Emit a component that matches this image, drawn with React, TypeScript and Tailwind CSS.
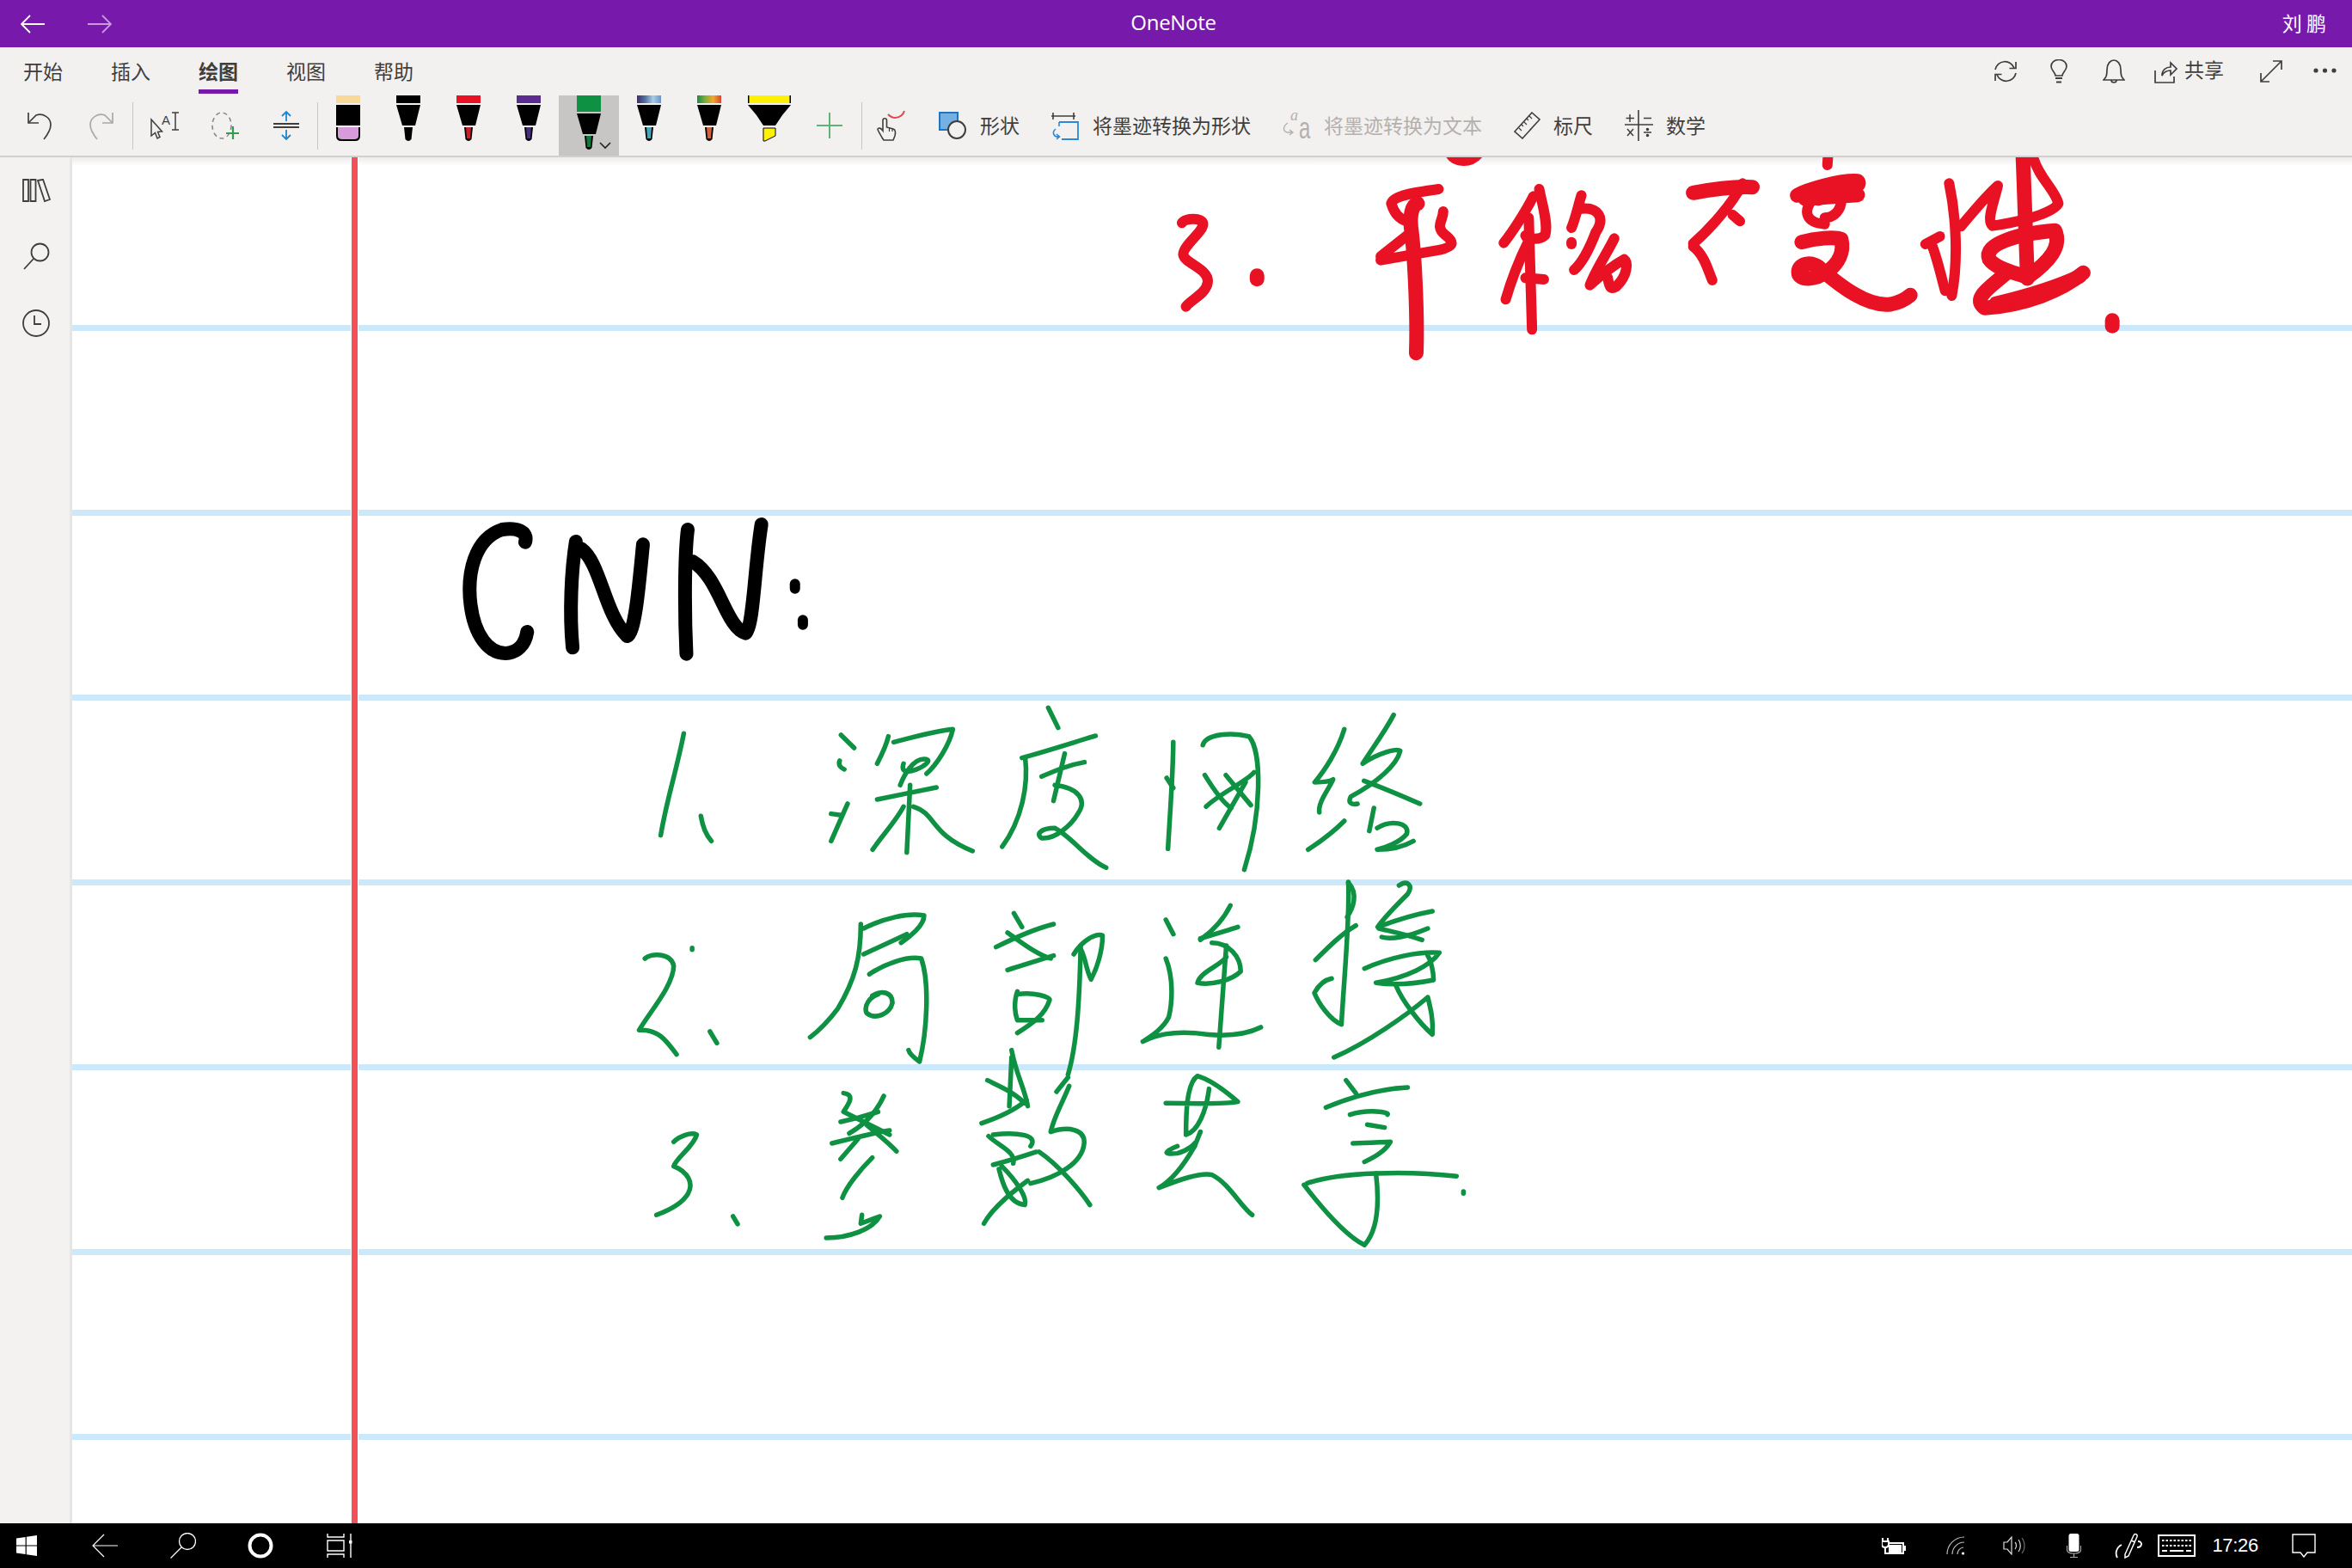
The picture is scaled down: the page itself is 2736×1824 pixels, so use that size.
import React from "react";

const RED = [
  "M98 268 C102 250 130 248 130 272 C130 300 98 350 100 380 C103 410 140 430 137 475 C135 515 112 535 104 560",
  "M488 150 C450 162 420 172 416 200 C420 230 428 255 440 262",
  "M495 228 C495 260 482 280 498 310 C515 340 508 352 490 362 L400 398",
  "M440 312 L400 385",
  "M641 150 C645 200 655 270 650 310 C642 330 622 325 620 312",
  "M632 175 C620 230 600 300 587 338",
  "M625 250 L630 640",
  "M625 330 C610 400 597 480 590 535",
  "M620 460 L648 465",
  "M705 172 C700 210 695 260 690 285",
  "M705 218 C730 212 742 250 727 300 C717 360 705 410 694 432",
  "M690 335 L690 342",
  "M755 322 C745 370 727 430 718 485 C730 460 750 420 770 395 C776 405 776 450 758 490 C747 505 747 480 745 458",
  "M935 240 L946 262",
  "M950 130 C935 200 900 290 875 340",
  "M875 350 C892 380 897 430 904 468",
  "M1055 190 C1042 230 1047 268 1075 272",
  "M1100 190 C1100 220 1090 250 1075 250",
  "M1264 130 C1275 250 1278 400 1268 522",
  "M1236 335 C1245 380 1250 440 1258 505",
  "M1228 342 L1250 315",
  "M1282 280 C1300 230 1320 175 1338 138 C1333 190 1320 260 1330 278 C1360 268 1420 240 1430 200 C1425 150 1400 110 1392 40",
  "M1080 30 L1079 66",
];
const RED_THICK = [
  "M456 200 C448 205 443 240 447 300 C452 400 456 600 454 722",
  "M875 163 C900 152 940 140 965 143",
  "M1033 172 C1050 150 1100 118 1125 122 C1133 142 1105 160 1065 182",
  "M1125 170 L1045 183",
  "M1040 335 C1060 322 1090 315 1100 325 C1105 370 1095 410 1080 436 C1060 470 1035 470 1035 440 C1035 405 1060 400 1070 432 C1100 490 1140 562 1175 552 C1190 545 1200 530 1205 520",
  "M1425 295 C1370 305 1315 340 1325 395 C1335 430 1370 445 1383 458 C1418 400 1435 350 1425 295",
  "M1350 445 C1322 500 1300 530 1318 565 C1380 555 1435 505 1468 442",
  "M1335 550 C1380 525 1430 490 1462 455",
  "M1376 25 L1383 462",
  "M212 452 L212 464",
  "M1512 608 L1512 628",
  "M508 22 C515 50 535 52 546 22",
];
const GREEN_A = [
  "M386 820 C375 950 360 1050 351 1175",
  "M412 1108 C415 1150 420 1175 428 1195",
  "M625 825 L645 870",
  "M623 915 C620 930 625 940 630 945",
  "M635 1065 L610 1195",
  "M610 1100 L625 1105",
  "M680 925 C690 880 695 850 697 830",
  "M705 850 C740 830 770 810 795 805 C790 860 770 930 755 960",
  "M720 925 C710 990 770 920 755 910 C735 900 720 970 715 1000",
  "M680 1050 C700 1040 745 1020 770 1008",
  "M730 1000 L725 1235",
  "M720 1075 C710 1120 690 1170 673 1225",
  "M735 1075 C770 1100 760 1170 825 1230",
  "M940 730 L955 800",
  "M900 905 C940 880 980 850 1012 828",
  "M905 905 C910 1000 900 1120 870 1215",
  "M930 970 C950 950 970 930 995 920",
  "M965 890 L948 1055",
  "M950 1000 C985 1010 1000 1050 985 1100 C975 1140 950 1190 930 1185 C920 1170 930 1150 950 1150 C975 1180 1000 1260 1028 1288",
  "M1130 850 C1130 950 1125 1100 1122 1222",
  "M1120 975 L1130 1010",
  "M1175 860 C1180 820 1220 815 1245 830 C1265 880 1265 1100 1238 1295",
  "M1178 965 C1190 1010 1205 1060 1218 1080",
  "M1180 1075 C1200 1030 1240 990 1253 955",
  "M1210 965 L1248 1070",
  "M1240 990 L1200 1150",
  "M1390 805 C1380 880 1360 950 1345 990 C1360 990 1370 985 1373 980 C1365 1020 1350 1060 1352 1095",
  "M1390 1125 C1375 1160 1355 1195 1335 1225",
  "M1465 755 C1450 820 1430 880 1418 925 C1440 890 1470 870 1475 880 C1470 930 1440 990 1400 1040 C1395 1060 1400 1070 1410 1065",
  "M1420 985 C1450 1010 1480 1040 1505 1065",
  "M1428 1160 L1435 1080",
  "M1440 1150 C1460 1120 1490 1130 1485 1170 C1475 1200 1450 1220 1440 1225 C1460 1225 1480 1215 1495 1195",
];
const GREEN_B = [
  "M75 345 C85 325 120 325 125 370 C125 440 80 540 65 595 C100 590 115 640 130 680",
  "M157 308 L157 314",
  "M188 600 L200 640",
  "M455 240 C490 205 530 185 560 195 C560 230 535 270 520 290",
  "M450 225 C450 340 440 420 410 520 C395 560 375 600 362 620",
  "M455 330 L530 260",
  "M465 400 C490 365 530 335 555 345 C570 430 565 600 552 705 C545 695 535 680 533 665",
  "M480 470 C465 480 455 510 460 535 C475 560 500 540 505 500 C505 460 485 455 470 475",
  "M716 187 L730 235",
  "M685 305 C720 270 755 240 785 225",
  "M705 255 C730 290 755 330 780 345",
  "M705 385 C730 370 760 350 785 335",
  "M722 460 C715 500 718 540 722 560",
  "M722 470 C750 460 780 480 778 490 C770 540 750 570 722 605",
  "M725 560 L765 560",
  "M820 330 C835 280 860 255 870 265 C870 320 860 380 850 418 C840 380 840 330 830 305",
  "M832 300 C830 500 825 650 810 750",
  "M980 210 L993 260",
  "M980 345 C995 420 990 510 985 550 C975 590 955 615 940 635 C965 610 990 600 1030 605 C1080 620 1120 610 1145 585",
  "M1092 160 C1080 210 1060 250 1040 280",
  "M1040 275 C1065 260 1090 245 1105 235",
  "M1060 290 C1090 290 1110 340 1110 390 C1095 420 1060 440 1035 430 C1040 390 1075 370 1085 340",
  "M1085 300 L1072 655",
  "M1297 78 C1300 200 1290 400 1285 575 C1265 560 1245 500 1238 465 C1245 440 1255 420 1268 415",
  "M1240 350 C1265 300 1285 260 1310 230",
  "M1297 80 C1315 120 1305 170 1295 200",
  "M1385 90 C1400 70 1410 90 1400 120 C1380 160 1360 200 1348 235 C1375 215 1415 190 1443 180",
  "M1350 240 C1370 250 1395 260 1425 280",
  "M1435 240 C1400 270 1370 280 1355 270",
  "M1325 380 C1370 340 1420 320 1455 325 C1440 370 1400 410 1345 430 C1380 440 1420 430 1445 420 C1445 390 1440 350 1435 335",
  "M1380 440 C1390 490 1420 570 1443 610 C1445 560 1440 520 1435 480 C1400 540 1330 640 1272 690",
  "M125 985 C135 965 155 950 165 960 C160 1000 130 1040 125 1070 C150 1090 160 1130 150 1165 C140 1200 115 1225 95 1240",
  "M228 1245 L236 1272",
  "M420 815 C440 820 430 850 420 880 C440 900 470 930 500 960",
  "M490 825 C480 870 460 920 430 955",
  "M415 915 C440 905 465 890 480 880",
  "M400 990 C440 970 480 950 500 945",
  "M460 925 C480 960 500 990 512 1018",
  "M445 975 L415 1045",
  "M470 1040 C450 1080 425 1140 418 1180",
  "M390 1320 C430 1320 470 1290 483 1245 L450 1270 L452 1240",
  "M712 665 C720 750 735 800 740 860",
  "M670 770 C690 790 715 810 735 850",
  "M712 690 L708 860",
  "M660 920 C690 900 720 870 738 840",
  "M680 960 C720 950 760 960 745 1000",
  "M672 965 C690 1000 720 1020 715 1060",
  "M680 1065 C710 1050 740 1030 755 1020",
  "M695 1070 C720 1120 740 1180 735 1205 C705 1200 695 1120 690 1080",
  "M740 1120 C720 1150 680 1210 664 1270",
  "M810 760 L790 810",
  "M812 790 C800 850 785 900 780 950 C810 930 840 940 838 990 C835 1060 790 1110 745 1130",
  "M760 1020 C790 1060 830 1150 848 1205",
  "M980 850 C1020 850 1080 855 1105 845 C1085 810 1060 770 1035 755 C1015 780 1015 900 1015 960 C1035 950 1050 880 1055 800",
  "M1040 950 L1030 1000",
  "M1000 1000 C975 1020 975 1030 1000 1025 C1020 1015 1030 990 1030 990",
  "M1030 1000 C1010 1070 990 1120 968 1145 C1000 1120 1040 1090 1060 1100 C1090 1130 1110 1210 1130 1240",
  "M1293 770 L1310 815",
  "M1258 865 C1300 830 1350 800 1400 795",
  "M1300 890 C1330 870 1370 880 1365 890",
  "M1330 925 L1360 935",
  "M1305 990 C1330 990 1360 985 1370 985 C1360 1020 1340 1040 1325 1055",
  "M1225 1130 C1280 1090 1400 1085 1485 1105",
  "M1220 1135 C1245 1200 1290 1310 1325 1345 C1350 1290 1350 1180 1345 1095",
  "M1497 1158 L1497 1165",
];
const BLACK = [
  "M145 152 C150 112 130 100 110 108 C68 140 56 260 62 370 C68 480 90 540 115 540 C133 538 145 510 148 465",
  "M222 150 C215 250 212 400 217 520",
  "M230 175 C260 225 265 400 300 480 C312 470 318 300 324 160",
  "M392 108 C387 200 387 400 390 542",
  "M400 220 C440 275 450 450 480 470 C492 445 493 250 504 90",
];

function Ink({ paths, color, width, tx, ty, sx, sy }: { paths: string[]; color: string; width: number; tx: number; ty: number; sx: number; sy: number }) {
  return (
    <g transform={`translate(${tx} ${ty}) scale(${sx} ${sy})`} fill="none" stroke={color} strokeWidth={width} strokeLinecap="round" strokeLinejoin="round">
      {paths.map((d, i) => (
        <path key={i} d={d} vectorEffect="non-scaling-stroke" />
      ))}
    </g>
  );
}

const IC = "#3f3e3d";

function Pen({ cap, tip, kind = "pen", selected = false, gradient }: { cap: string; tip: string; kind?: "pen" | "marker" | "hl"; selected?: boolean; gradient?: string[] }) {
  const id = `g${cap.replace("#", "")}`;
  const dy = selected ? 10 : 0;
  return (
    <div className={`w-[70px] h-[70px] ${selected ? "bg-[#c8c6c4]" : ""}`}>
      <svg width="70" height="70" viewBox="0 0 70 70">
        {gradient && (
          <defs>
            <linearGradient id={id}>
              {gradient.map((c, i) => (
                <stop key={i} offset={i / (gradient.length - 1)} stopColor={c} />
              ))}
            </linearGradient>
          </defs>
        )}
        {kind === "hl" ? (
          <g>
            <rect x="10" y="0" width="50" height="9" fill="#000" />
            <rect x="11.5" y="0" width="47" height="9" fill={cap} />
            <path d="M10 11 H60 L50 23 L42 35 H28 L20 23 Z" fill="#000" />
            <path d="M28 38 H42 V47 L30 53 H28 Z" fill={tip} stroke="#000" strokeWidth="1" />
          </g>
        ) : (
          <g>
            <rect x="21" y="0" width="28" height={9 + dy} fill={gradient ? `url(#${id})` : cap} />
            {kind === "marker" ? (
              <g>
                <rect x="21" y="11" width="28" height="24" fill="#000" />
                <path d="M21 37 H49 V47 Q49 53 43 53 H27 Q21 53 21 47 Z" fill="#000" />
                <path d="M23 37 H47 V47 Q47 51 42 51 H28 Q23 51 23 47 Z" fill={tip} />
              </g>
            ) : (
              <g>
                <path d={`M21 ${11 + dy} H49 L43 ${35 + dy} H28 Z`} fill="#000" />
                <path d={`M30 ${37 + dy} H40 L38.5 ${51 + dy} Q35 ${55 + dy} 31.5 ${51 + dy} Z`} fill="#000" />
                <path d={`M32 ${37 + dy} H38 L37 ${50 + dy} H33 Z`} fill={tip} />
              </g>
            )}
          </g>
        )}
        {selected && <path d="M48 55 L54 61 L60 55" fill="none" stroke="#222" strokeWidth="1.6" />}
      </svg>
    </div>
  );
}

function Labeled({ icon, label, disabled = false, gap = 16 }: { icon: React.ReactNode; label: string; disabled?: boolean; gap?: number }) {
  return (
    <div className={`flex items-center ml-[37px] ${gap === 16 ? "gap-[16px]" : "gap-[15px]"} ${disabled ? "text-[#b3b0ad]" : "text-[#3f3e3d]"}`}>
      {icon}
      <span className="text-[23px] leading-none whitespace-nowrap -mt-[1px]">{label}</span>
    </div>
  );
}

function S({ w, h, children, className = "" }: { w: number; h: number; children: React.ReactNode; className?: string }) {
  return (
    <svg width={w} height={h} viewBox={`0 0 ${w} ${h}`} fill="none" stroke={IC} strokeWidth="1.7" className={`shrink-0 ${className}`}>
      {children}
    </svg>
  );
}

function Tab({ label, active = false }: { label: string; active?: boolean }) {
  return (
    <div className={`h-[54px] pt-[6px] flex items-center border-b-[5px] text-[23px] leading-none text-[#3f3e3d] ${active ? "border-[#7719aa] font-bold" : "border-transparent"}`}>
      {label}
    </div>
  );
}

function Sep() {
  return <div className="w-px h-[55px] bg-[#c8c6c4] shrink-0" />;
}

function ToolBtn({ children, w = "w-[71px]" }: { children: React.ReactNode; w?: string }) {
  return <div className={`${w} h-[70px] flex items-center justify-center shrink-0`}>{children}</div>;
}

export default function App() {
  return (
    <div className="w-[2736px] h-[1824px] flex flex-col overflow-hidden bg-white font-['Noto_Sans_CJK_SC','Noto_Sans',sans-serif]">
      {/* Title bar */}
      <div className="h-[55px] bg-[#7719aa] flex items-center text-white shrink-0">
        <div className="flex-1 flex items-center pl-[24px] gap-[50px]">
          <svg width="28" height="22" viewBox="0 0 28 22" fill="none" stroke="#fff" strokeWidth="1.8"><path d="M28 11 H1 M11 1 L1 11 L11 21" /></svg>
          <svg width="28" height="22" viewBox="0 0 28 22" fill="none" stroke="#c898e0" strokeWidth="1.8"><path d="M0 11 H27 M17 1 L27 11 L17 21" /></svg>
        </div>
        <div className="text-[24px] leading-none font-['Open_Sans','Noto_Sans',sans-serif] tracking-[-0.3px] -mt-[3px]">OneNote</div>
        <div className="flex-1 flex justify-end pr-[30px] text-[23px] leading-none -mt-[3px]">刘 鹏</div>
      </div>

      {/* Ribbon */}
      <div className="bg-[#f3f1f0] h-[128px] shrink-0 border-b-2 border-[#d2d0ce] flex flex-col">
        <div className="h-[56px] flex items-start pl-[27px] pr-[18px] shrink-0">
          <div className="flex gap-[56px]">
            <Tab label="开始" />
            <Tab label="插入" />
            <Tab label="绘图" active />
            <Tab label="视图" />
            <Tab label="帮助" />
          </div>
          <div className="ml-auto h-[56px] flex items-center">
            <S w={28} h={26}>
              <path d="M2 11 A11.5 11.5 0 0 1 24 9" />
              <path d="M26 2 V9.5 H18.5" />
              <path d="M26 15 A11.5 11.5 0 0 1 4 17" />
              <path d="M2 24 V16.5 H9.5" />
            </S>
            <S w={20} h={28} className="ml-[38px]">
              <path d="M6 19 C6 15 1 13 1 8 A9 7.5 0 0 1 19 8 C19 13 14 15 14 19 Z" />
              <path d="M6 22 H14 M7 26.5 H13" strokeWidth="2" />
            </S>
            <S w={26} h={28} className="ml-[41px]">
              <path d="M1 24 C4 21 5 19 5 12 C5 5 9 1 13 1 C17 1 21 5 21 12 C21 19 22 21 25 24 Z" />
              <path d="M10 24 A3 3 0 0 0 16 24" />
            </S>
            <S w={27} h={27} className="ml-[34px]">
              <path d="M1 12 V26 H23 V19" />
              <path d="M9 18 C9 11 14 8 19 8 V3 L26 10 L19 17 V12 C14 12 11 14 9 18 Z" />
            </S>
            <span className="ml-[8px] text-[23px] leading-none text-[#3f3e3d] -mt-[5px]">共享</span>
            <S w={26} h={26} className="ml-[42px]">
              <path d="M1 25 L25 1 M15 1 H25 V11 M1 15 V25 H11" />
            </S>
            <svg width="27" height="6" viewBox="0 0 27 6" fill="#3f3e3d" className="ml-[36px] -mt-[2px]"><circle cx="3" cy="3" r="2.6" /><circle cx="13.5" cy="3" r="2.6" /><circle cx="24" cy="3" r="2.6" /></svg>
          </div>
        </div>
        <div className="h-[70px] flex items-center shrink-0 pl-[10px]">
          <ToolBtn w="w-[72px]">
            <S w={32} h={34}>
              <path d="M3 2 V14 H15" />
              <path d="M3 14 L12 5 C20 2 29 8 29 16 C29 22 25 28 21 33" />
            </S>
          </ToolBtn>
          <ToolBtn w="w-[72px]">
            <S w={32} h={34} className="opacity-40">
              <path d="M29 2 V14 H17" />
              <path d="M29 14 L20 5 C12 2 3 8 3 16 C3 22 7 28 11 33" />
            </S>
          </ToolBtn>
          <Sep />
          <ToolBtn>
            <svg width="36" height="32" viewBox="0 0 36 32" fill="none" stroke={IC} strokeWidth="1.5" className="overflow-visible">
              <path d="M3 9 V28 L7.5 24.5 L10 31 L13 29.5 L10.5 23.5 L15.5 23 Z" />
              <text x="15" y="15" fontSize="15" fill={IC} stroke="none" fontFamily="'Liberation Sans',sans-serif">A</text>
              <path d="M27 1 H35 M27 21 H35 M31 1 V21" />
            </svg>
          </ToolBtn>
          <ToolBtn>
            <svg width="34" height="34" viewBox="0 0 34 34" fill="none">
              <ellipse cx="13" cy="17" rx="11" ry="15" stroke="#8a8886" strokeWidth="1.6" strokeDasharray="5 4" />
              <path d="M26 18 V33 M18 26 H33" stroke="#2f9e4f" strokeWidth="2.2" />
            </svg>
          </ToolBtn>
          <ToolBtn>
            <svg width="32" height="34" viewBox="0 0 32 34" fill="none">
              <path d="M1 15 H31 M1 19 H31" stroke="#3f3e3d" strokeWidth="2" />
              <path d="M16 12 V1 M11 6 L16 1 L21 6 M16 22 V33 M11 28 L16 33 L21 28" stroke="#1f85cf" strokeWidth="1.8" />
            </svg>
          </ToolBtn>
          <div className="w-px" />
          <Sep />
          <Pen cap="#f8d998" tip="#d79bdc" kind="marker" />
          <Pen cap="#000000" tip="#000000" />
          <Pen cap="#e81224" tip="#c8202a" />
          <Pen cap="#5c2d91" tip="#46307e" />
          <Pen cap="#0e9142" tip="#0e7a3a" selected />
          <Pen cap="#223" tip="#46a6b8" gradient={["#3a2c70", "#54709f", "#a8cdea", "#6a94c8"]} />
          <Pen cap="#1a9" tip="#d0613a" gradient={["#1b8a45", "#7fae3a", "#f4a62c", "#d9442e"]} />
          <Pen cap="#fff100" tip="#fff100" kind="hl" />
          <ToolBtn w="w-[70px]">
            <svg width="32" height="32" viewBox="0 0 32 32" stroke="#5fb377" strokeWidth="2"><path d="M16 1 V31 M1 16 H31" /></svg>
          </ToolBtn>
          <div className="w-[2px]" />
          <Sep />
          <div className="ml-[15px] w-[37px] flex justify-center">
            <svg width="34" height="36" viewBox="0 0 34 36" fill="none">
              <path d="M13 5 C15 7 17 9 21 9 C27 9 31 5 32 1" stroke="#e0484f" strokeWidth="2" />
              <path d="M6 32 C4 28 1 24 1 22 C2 20 5 21 7 24 V12 A2.2 2.2 0 0 1 11.5 12 V20 L19 22 C22 23 22 26 21 30 L19 35 H8 Z" stroke={IC} strokeWidth="1.6" />
              <path d="M14.5 20 V25 M18 21 V25" stroke={IC} strokeWidth="1.2" />
            </svg>
          </div>
          <Labeled
            label="形状"
            icon={
              <svg width="32" height="32" viewBox="0 0 32 32" fill="none" className="shrink-0">
                <rect x="1" y="1" width="21" height="20" fill="#74b0e2" stroke="#1f75c0" strokeWidth="2" />
                <circle cx="21" cy="21" r="10" fill="#f3f1f0" stroke={IC} strokeWidth="2" />
              </svg>
            }
          />
          <Labeled
            label="将墨迹转换为形状"
            icon={
              <svg width="32" height="33" viewBox="0 0 32 33" fill="none" className="shrink-0">
                <path d="M2 1 V9 M26 1 V9 M0 5 H28" stroke={IC} strokeWidth="1.6" />
                <path d="M9 12 H31 V32 H12" stroke="#2b88d8" strokeWidth="1.8" />
                <path d="M9 12 V17 M5 20 C0 24 3 30 9 29 M6 26 L9.5 29 L6 32" stroke="#2b88d8" strokeWidth="1.6" />
              </svg>
            }
          />
          <Labeled
            disabled
            label="将墨迹转换为文本"
            gap={15}
            icon={
              <svg width="33" height="34" viewBox="0 0 33 34" fill="none" className="shrink-0 overflow-visible">
                <text x="9" y="11" fontSize="18" fontStyle="italic" fill="#b3b0ad" fontFamily="'Liberation Serif',serif">a</text>
                <text transform="translate(19 32) scale(1 1.5)" x="0" y="0" fontSize="24" fill="#b3b0ad" fontFamily="'Liberation Sans',sans-serif">a</text>
                <path d="M6 14 C0 18 0 24 6 25 H12 M8 22 L12 25 L8 28" stroke="#b3b0ad" strokeWidth="1.4" />
              </svg>
            }
          />
          <Labeled
            label="标尺"
            gap={15}
            icon={
              <svg width="31" height="32" viewBox="0 0 31 32" fill="none" stroke={IC} strokeWidth="1.6" className="shrink-0">
                <path d="M21 1 L30 9 L10 31 L1 23 Z" />
                <path d="M18 5 L21 8 M15 8 L17 10 M12 12 L15 15 M9 15 L11 17 M6 19 L9 22" strokeWidth="1.2" />
              </svg>
            }
          />
          <Labeled
            label="数学"
            gap={15}
            icon={
              <svg width="33" height="36" viewBox="0 0 33 36" fill="none" stroke={IC} strokeWidth="1.6" className="shrink-0">
                <path d="M16 0 V36 M0 17 H33" />
                <path d="M6 5 V14 M1.5 9.5 H11 M22 9.5 H31 M3 22 L10 30 M10 22 L3 30 M22 26 H31" strokeWidth="1.5" />
                <circle cx="26.5" cy="22.5" r="1" fill={IC} />
                <circle cx="26.5" cy="29.5" r="1" fill={IC} />
              </svg>
            }
          />
        </div>
      </div>

      {/* Main */}
      <div className="flex-1 flex min-h-0">
        <div className="w-[84px] shrink-0 bg-[#f3f2f1] border-r-[3px] border-[#e6e5e4] flex flex-col items-center gap-[46px] pt-[25px] pl-[3px]">
          <S w={33} h={28}>
            <path d="M1 1 H7 V26 H1 Z M9.5 1 H15.5 V26 H9.5 Z" strokeWidth="1.8" />
            <path d="M18 2 L24 0.8 L32 24 L26 26 Z" strokeWidth="1.8" />
          </S>
          <S w={31} h={32}>
            <circle cx="19.5" cy="11.5" r="10" strokeWidth="1.8" />
            <path d="M12 19 L1 31" strokeWidth="1.8" />
          </S>
          <S w={32} h={32}>
            <circle cx="16" cy="16" r="15" strokeWidth="1.8" />
            <path d="M14 7 V17 H22" strokeWidth="1.8" />
          </S>
        </div>
        <div className="flex-1 relative overflow-hidden bg-white">
          <div className="flex flex-col gap-[208px] pt-[195px]">
            {[0, 1, 2, 3, 4, 5, 6].map((i) => (
              <div key={i} className="h-[7px] bg-[#cce9fb]" />
            ))}
          </div>
          <div className="absolute top-0 left-0 right-0 h-[10px] bg-gradient-to-b from-[#ececec] to-transparent" />
          <div className="absolute top-0 bottom-0 left-[325px] w-[7px] bg-[#f4505a] ring-1 ring-white" />
          <svg className="absolute inset-0" width="2652" height="1589" viewBox="84 183 2652 1589">
            <Ink paths={RED} color="#e81224" width={12} tx={1300} ty={170} sx={0.7653} sy={0.3333} />
            <Ink paths={RED_THICK} color="#e81224" width={17} tx={1300} ty={170} sx={0.7653} sy={0.3333} />
            <Ink paths={BLACK} color="#000" width={16} tx={500} ty={580} sx={0.7653} sy={0.3333} />
            <Ink paths={["M555 298 L555 314", "M567 424 L567 440"]} color="#000" width={12} tx={500} ty={580} sx={0.7653} sy={0.3333} />
            <Ink paths={GREEN_A} color="#0e9142" width={5.5} tx={500} ty={580} sx={0.7653} sy={0.3333} />
            <Ink paths={GREEN_B} color="#0e9142" width={5.5} tx={700} ty={1000} sx={0.6696} sy={0.3333} />
          </svg>
        </div>
      </div>

      {/* Taskbar */}
      <div className="h-[52px] bg-black shrink-0 flex items-center">
        <svg width="24" height="24" viewBox="0 0 24 24" fill="#fff" className="ml-[19px]"><path d="M0 3.4 L10.6 2 V11.4 H0 Z M11.8 1.8 L24 0 V11.4 H11.8 Z M0 12.6 H10.6 V22 L0 20.6 Z M11.8 12.6 H24 V24 L11.8 22.2 Z" /></svg>
        <svg width="30" height="28" viewBox="0 0 30 28" fill="none" stroke="#fff" strokeWidth="1.2" className="ml-[64px]"><path d="M30 14 H1 M14 1 L1 14 L14 27" /></svg>
        <svg width="30" height="30" viewBox="0 0 30 30" fill="none" stroke="#fff" strokeWidth="1.3" className="ml-[61px]"><circle cx="20" cy="10" r="9.5" /><path d="M13 17 L0.5 29.5" /></svg>
        <svg width="30" height="30" viewBox="0 0 30 30" fill="none" stroke="#fff" strokeWidth="4" className="ml-[60px]"><circle cx="15" cy="15" r="12.5" /></svg>
        <svg width="30" height="28" viewBox="0 0 30 28" fill="none" stroke="#fff" strokeWidth="1.4" className="ml-[62px]">
          <path d="M1 0 V4 H20 V0 M1 8 H20 V20 H1 Z M1 28 V24 H20 V28 M28 0 V28" />
          <rect x="26" y="8" width="3.5" height="3.5" fill="#fff" stroke="none" />
        </svg>
        <div className="ml-auto flex items-center pr-[42px]">
          <svg width="28" height="20" viewBox="0 0 28 20" fill="none" stroke="#fff" strokeWidth="2">
            <path d="M1 1 V5 M7 1 V5 M0 5 H8 V8 C8 11 6 12 4 12 C2 12 0 11 0 8 Z M4 12 V20" />
            <path d="M8 7 H25 V19 H5" />
            <rect x="8" y="9" width="15" height="9" fill="#fff" stroke="none" />
            <rect x="26" y="10" width="2" height="6" fill="#fff" stroke="none" />
          </svg>
          <svg width="21" height="22" viewBox="0 0 21 22" fill="none" stroke="#bbb" strokeWidth="1.2" className="ml-[47px]">
            <path d="M1 21 A20 20 0 0 1 21 1 M7 21 A14 14 0 0 1 21 7 M13 21 A8 8 0 0 1 20 13" />
            <circle cx="19.5" cy="20" r="1.6" fill="#fff" stroke="none" />
          </svg>
          <svg width="26" height="22" viewBox="0 0 26 22" fill="none" stroke="#ddd" strokeWidth="1.2" className="ml-[45px]">
            <path d="M1 7 H5 L10 1 V21 L5 15 H1 Z" />
            <path d="M14 7 C16 9 16 13 14 15 M18 4 C21 8 21 14 18 18" />
            <path d="M22 2 C26 7 26 15 22 20" stroke="#666" />
          </svg>
          <svg width="17" height="28" viewBox="0 0 17 28" fill="none" className="ml-[48px]">
            <rect x="2.5" y="0" width="12" height="21" rx="2.5" fill="#fff" />
            <path d="M0.5 14 V19 C0.5 22 3 23 8.5 23 C14 23 16.5 22 16.5 19 V14 M8.5 23 V27 M4 27.5 H13" stroke="#aaa" strokeWidth="1.2" />
          </svg>
          <svg width="32" height="31" viewBox="0 0 32 31" fill="none" stroke="#fff" strokeWidth="1.5" className="ml-[39px]">
            <path d="M12 25 L22 3 C23 0.5 27 1.5 26 4.5 L16 27 L12 29 Z M19 9 L24 11" />
            <path d="M8 14 C2 17 0 24 3 29 M27 10 C33 10 32 17 26 17" strokeWidth="1.8" />
          </svg>
          <svg width="44" height="26" viewBox="0 0 44 26" fill="none" className="ml-[18px]">
            <rect x="1" y="1" width="42" height="24" stroke="#fff" strokeWidth="2" />
            <path d="M5 7 H39 M5 13 H39" stroke="#fff" strokeWidth="2" strokeDasharray="2.5 2" />
            <path d="M5 19 H11 M14 19 H30 M33 19 H39" stroke="#fff" strokeWidth="2" />
          </svg>
          <span className="ml-[19px] text-white text-[22px] leading-none font-['Liberation_Sans',sans-serif] tracking-[-0.3px]">17:26</span>
          <svg width="28" height="28" viewBox="0 0 28 28" fill="none" stroke="#fff" strokeWidth="1.4" className="ml-[39px]">
            <path d="M1 1 H27 V22 H18 L14 27 L10 22 H1 Z" />
          </svg>
        </div>
      </div>
    </div>
  );
}
